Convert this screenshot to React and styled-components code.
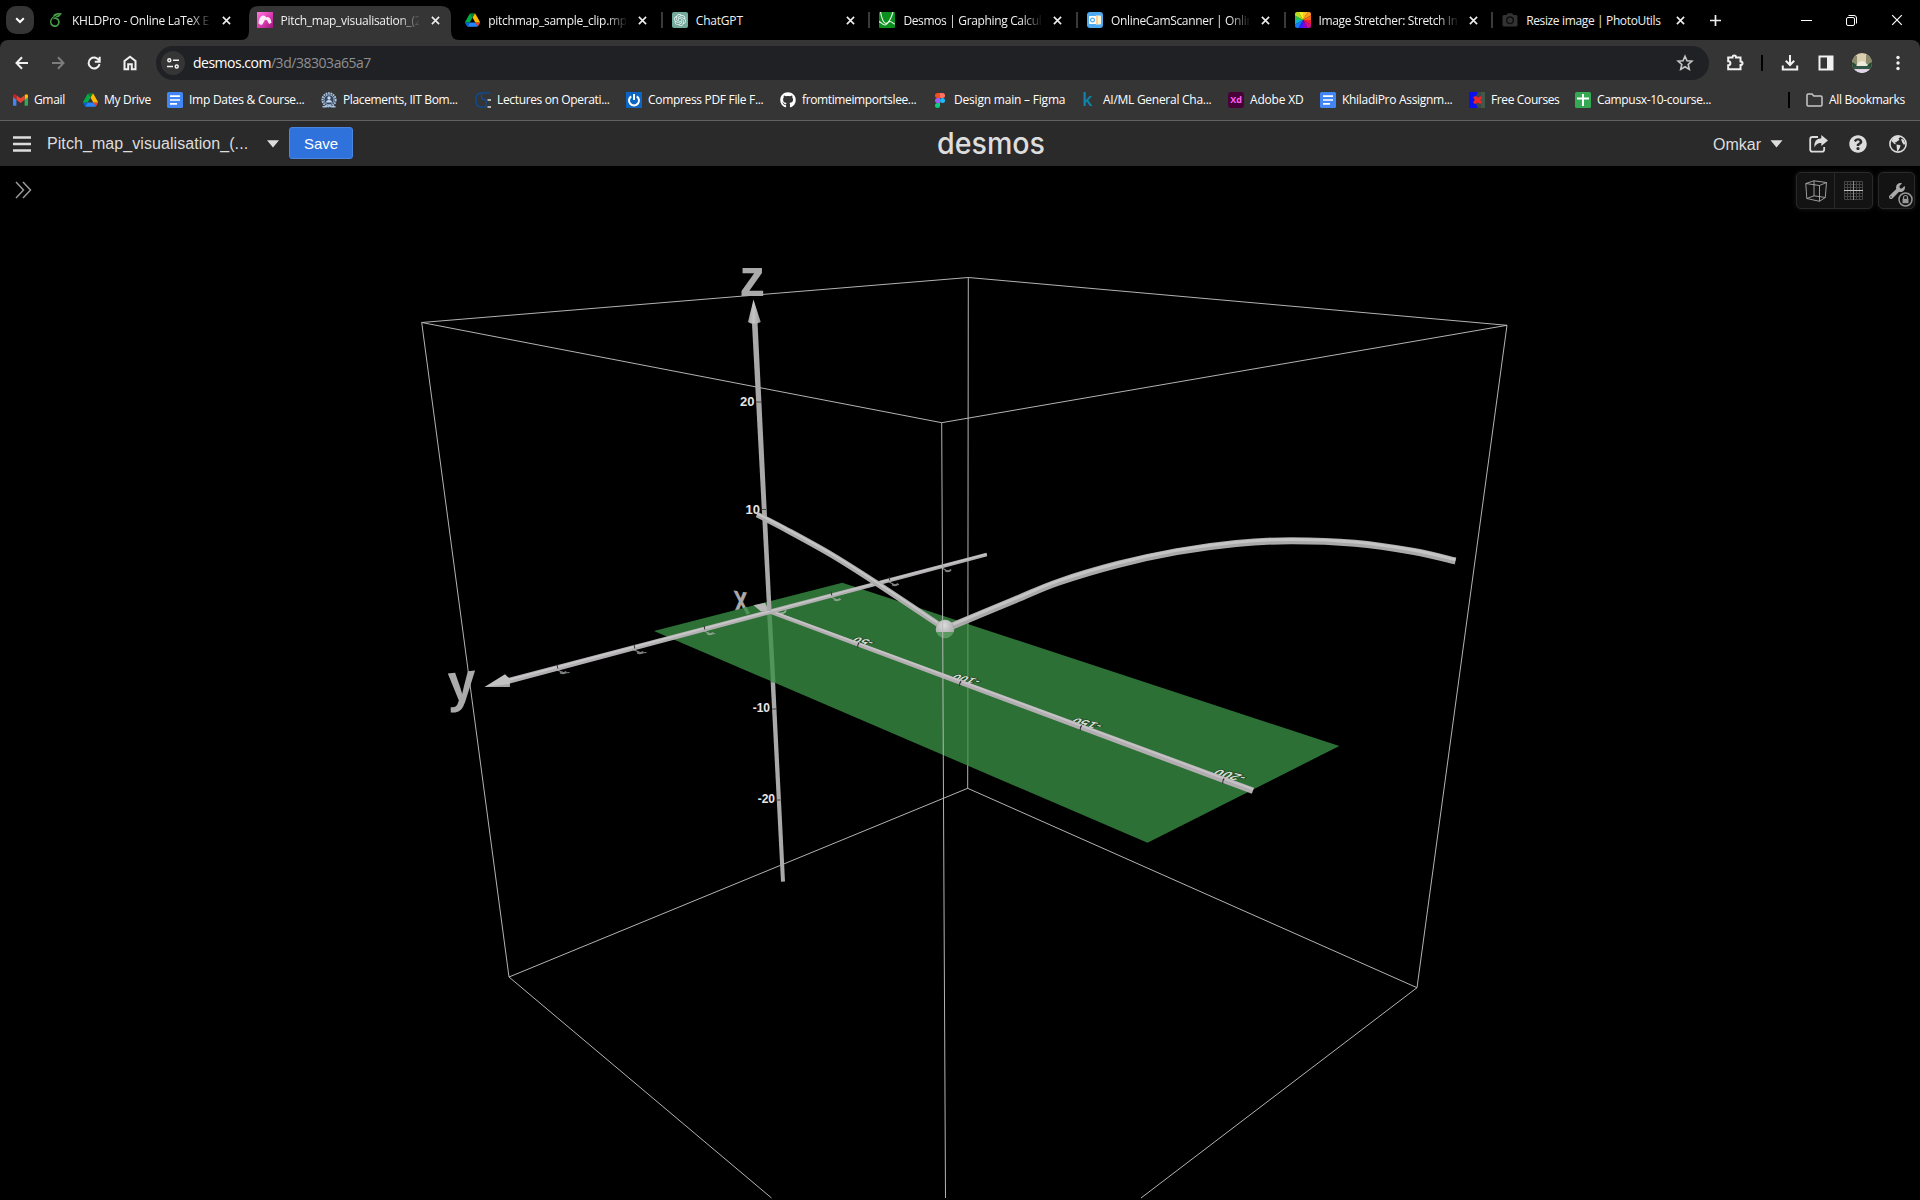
import React from "react";
import styled, { createGlobalStyle, css } from "styled-components";
import { FaGithub, FaWrench, FaQuestionCircle } from "react-icons/fa";
import { SiOverleaf, SiOpenai } from "react-icons/si";

const ui = `"Open Sans", "Noto Sans", sans-serif`;
const arial = `"Liberation Sans", Arial, sans-serif`;

const GlobalStyle = createGlobalStyle`
  html, body { margin: 0; padding: 0; background: #000; overflow: hidden; }
  * { box-sizing: border-box; }
  svg { display: block; flex: none; }
`;

const Window = styled.div`
  width: 1920px;
  height: 1200px;
  display: flex;
  flex-direction: column;
  background: #000;
  color: #fff;
  font-family: ${ui};
`;

/* ---------- tab strip ---------- */
const TabStrip = styled.div`
  height: 40px;
  flex: none;
  display: flex;
  align-items: stretch;
`;
const TabSearch = styled.div`
  width: 28px;
  height: 28px;
  margin: 6px 4px 0 6px;
  border-radius: 10px;
  background: #353535;
  display: flex;
  align-items: center;
  justify-content: center;
`;
const Tab = styled.div`
  width: 207.6px;
  padding: 0 12px 0 3px;
  position: relative;
  display: flex;
  align-items: center;
`;
const ActiveShape = styled.svg`
  position: absolute;
  left: -5px;
  top: 6px;
`;
const TabSep = styled.span`
  width: 2px;
  height: 16px;
  margin-left: -3px;
  margin-right: 9px;
  background: ${(p) => (p.$hidden ? "transparent" : "#3a3a3a")};
`;
const Favicon = styled.span`
  width: 16px;
  height: 16px;
  margin-left: ${(p) => p.$shift || 0}px;
  display: flex;
  position: relative;
  align-items: center;
  justify-content: center;
`;
const TabTitle = styled.span`
  position: relative;
  margin-left: 8px;
  width: 138px;
  height: 20px;
  line-height: 21px;
  font-size: 12px;
  letter-spacing: ${(p) => p.$track}px;
  white-space: nowrap;
  color: #f0f0f0;
  ${(p) =>
    p.$fade &&
    css`
      mask-image: linear-gradient(to right, #000 118px, transparent 140px);
    `}
`;
const TabClose = styled.span`
  position: relative;
  margin-left: 12px;
`;
const NewTab = styled.span`
  display: flex;
  align-items: center;
  margin-left: 11px;
`;
const WindowControls = styled.div`
  margin-left: auto;
  display: flex;
  align-items: center;
  gap: 34px;
  padding-right: 17px;
`;

/* ---------- toolbar ---------- */
const BrowserChrome = styled.div`
  flex: none;
  height: 81px;
  background: #353535;
  border-radius: 8px 8px 0 0;
  border-bottom: 1px solid #626262;
`;
const Toolbar = styled.div`
  height: 46px;
  display: flex;
  align-items: center;
  padding: 0 12px;
`;
const NavIcons = styled.div`
  display: flex;
  gap: 16px;
  margin-right: 16px;
`;
const Omnibox = styled.div`
  width: 1554px;
  height: 34px;
  border-radius: 17px;
  background: #202124;
  display: flex;
  align-items: center;
  padding: 0 14px 0 5px;
`;
const SiteInfo = styled.div`
  width: 24px;
  height: 24px;
  border-radius: 12px;
  background: #353535;
  display: flex;
  align-items: center;
  justify-content: center;
  margin-right: 8px;
`;
const Address = styled.span`
  font-size: 14px;
  line-height: 20px;
  letter-spacing: -0.5px;
  flex: 1;
  color: #fff;
`;
const Path = styled.span`
  color: #8f8f92;
  letter-spacing: -0.46px;
`;
const ToolIcons = styled.div`
  display: flex;
  align-items: center;
  margin-left: 16px;
`;
const ToolSep = styled.span`
  width: 2px;
  height: 16px;
  background: #000;
  margin: ${(p) => p.$m};
`;
const Avatar = styled.span`
  width: 20px;
  height: 20px;
  border-radius: 10px;
  overflow: hidden;
  margin: 0 16px 0 16px;
`;
const SidePanel = styled.span`
  margin-left: 16px;
`;

/* ---------- bookmarks ---------- */
const Bookmarks = styled.div`
  height: 34px;
  margin-top: -3px;
  display: flex;
  align-items: center;
  padding: 0 14px 0 12px;
`;
const Bookmark = styled.div`
  display: flex;
  align-items: center;
  margin-right: 16px;
`;
const BookmarkLabel = styled.span`
  margin-left: 6px;
  width: ${(p) => p.$w}px;
  font-size: 12px;
  line-height: 18px;
  letter-spacing: ${(p) => p.$track}px;
  white-space: nowrap;
  color: #fff;
`;
const AllBookmarks = styled.div`
  margin-left: auto;
  display: flex;
  align-items: center;
`;

/* ---------- calculator header ---------- */
const CalcHeader = styled.header`
  flex: none;
  height: 45px;
  background: #2a2a2a;
  display: grid;
  grid-template-columns: 936px 110px 1fr;
  align-items: center;
  font-family: ${arial};
`;
const HeaderLeft = styled.div`
  display: flex;
  align-items: center;
  padding-left: 13px;
`;
const GraphTitle = styled.span`
  margin-left: 16px;
  width: 220px;
  font-size: 16px;
  line-height: 22px;
  letter-spacing: 0.07px;
  color: #ddd;
  white-space: nowrap;
`;
const SaveButton = styled.button`
  margin-left: 10px;
  width: 64px;
  height: 32px;
  margin-top: -1px;
  padding: 1px 0 0;
  border: 1px solid #4a86e0;
  border-radius: 3px;
  background: #2f72dc;
  color: #fff;
  font: 15px ${arial};
`;
const HeaderRight = styled.div`
  display: flex;
  align-items: center;
  justify-content: flex-end;
  padding-right: 13px;
  color: #ddd;
`;
const UserName = styled.span`
  font-size: 16px;
  margin-right: 9px;
  padding-top: 2px;
`;
const HeaderIcon = styled.span`
  margin-left: ${(p) => p.$gap}px;
`;

/* ---------- graph ---------- */
const GraphArea = styled.main`
  flex: 1;
  position: relative;
  overflow: hidden;
`;
const Expand = styled.div`
  position: absolute;
  left: 15px;
  top: 15px;
`;
const FloatingTools = styled.div`
  position: absolute;
  right: 5px;
  top: 6px;
  display: flex;
  gap: 5px;
`;
const ToolGroup = styled.div`
  height: 37px;
  display: flex;
  border: 1px solid #292929;
  border-radius: 5px;
  background: #131313;
  box-shadow: 0 0 5px rgba(255, 255, 255, 0.1);
`;
const ToolButton = styled.div`
  width: ${(p) => p.$w}px;
  position: relative;
  display: flex;
  align-items: center;
  justify-content: center;
  color: #aaa;
  & + & {
    border-left: 1px solid #292929;
  }
`;
const LockBadge = styled.svg`
  position: absolute;
  right: 1px;
  bottom: 1px;
`;

/* ---------- small drawings ---------- */
const Cross = ({ size = 9, w = 1.8, color = "#eee" }) => (
  <svg width={size} height={size} viewBox="0 0 10 10">
    <path d="M1 1L9 9M9 1L1 9" stroke={color} strokeWidth={w} />
  </svg>
);
const Drive = () => (
  <svg width="15" height="14" viewBox="0 0 87 78">
    <path d="M6.6 66.9l3.9 6.6c.8 1.4 2 2.5 3.3 3.3L27.5 53H0c0 1.5.4 3.1 1.2 4.5z" fill="#0066da" />
    <path d="M43.7 25L29.9 1.2c-1.3.8-2.5 1.9-3.3 3.3L1.2 48.5A9 9 0 0 0 0 53h27.5z" fill="#00ac47" />
    <path d="M73.6 76.8c1.3-.8 2.5-1.9 3.3-3.3l9.2-16c.8-1.4 1.2-3 1.2-4.5H59.8l5.9 11.5z" fill="#ea4335" />
    <path d="M43.7 25L57.4 1.2C56.1.4 54.5 0 52.9 0H34.5c-1.6 0-3.2.4-4.5 1.2z" fill="#00832d" />
    <path d="M59.8 53H27.5L13.8 76.8c1.3.8 2.9 1.2 4.5 1.2h50.8c1.6 0 3.2-.4 4.5-1.2z" fill="#2684fc" />
    <path d="M73.4 26.5L60.7 4.5c-.8-1.4-2-2.5-3.3-3.3L43.7 25l16.1 28h27.5c0-1.5-.4-3.1-1.2-4.5z" fill="#ffba00" />
  </svg>
);
const DesmosPink = () => (
  <svg width="16" height="16" viewBox="0 0 16 16">
    <defs>
      <linearGradient id="pk" x1="0" y1="0" x2="1" y2="1">
        <stop offset="0" stopColor="#ff7ae0" />
        <stop offset=".5" stopColor="#dd3fb4" />
        <stop offset="1" stopColor="#a0127d" />
      </linearGradient>
    </defs>
    <rect width="16" height="16" fill="url(#pk)" />
    <path d="M1.500 11.500C1.800 7 3.800 3.500 6.500 3.500c1.500 0 2.300 1 2.600 2 2.200-1.800 5 .5 5.400 5.200l-2.500 1.300c-1-2.500-2-4.200-3.400-4.200C7 7.800 6.500 13 4 13z" fill="#fbe9f6" />
  </svg>
);
const DesmosGreen = () => (
  <svg width="16" height="16" viewBox="0 0 16 16">
    <rect width="16" height="16" rx="1" fill="#0a8f1f" />
    <path d="M1.500 0C3 8 5 11.500 7 11.500S11.500 8 14 0M0 9.500c2 .5 3.500 3.500 6 3.500s2.500-3.500 5-3.500 3 2.500 5 2.500" fill="none" stroke="#e8f6e8" strokeWidth="1.200" />
  </svg>
);
const ChatGpt = () => (
  <svg width="16" height="16" viewBox="0 0 16 16">
    <rect width="16" height="16" rx="2" fill="#74aa9c" />
    <g transform="translate(2 2)">
      <SiOpenai size={12} color="#e8f3f0" />
    </g>
  </svg>
);
const CamScanner = () => (
  <svg width="16" height="16" viewBox="0 0 16 16">
    <rect width="16" height="16" rx="3" fill="#4fabf0" />
    <rect x="2" y="4" width="8" height="8" rx="1" fill="#fff" />
    <rect x="8.500" y="3.500" width="5.500" height="9" rx="1" fill="#fdf3d0" />
    <circle cx="5.500" cy="8" r="1.900" fill="none" stroke="#4fabf0" strokeWidth="1.200" />
    <path d="M10 4v8" stroke="#f3a04c" strokeWidth=".8" />
  </svg>
);
const wheel = ["#ffc02b", "#ff9a20", "#ff6a1a", "#f0203a", "#d0108a", "#8a00d4", "#3c1af0", "#1279ff", "#10b0d8", "#21c25a", "#b8e020", "#f4ec20"];
const ColorWheel = () => (
  <svg width="16" height="16" viewBox="0 0 16 16">
    <clipPath id="cw"><rect width="16" height="16" rx="2" /></clipPath>
    <g clipPath="url(#cw)">
      {wheel.map((c, i) => {
        const a = ((i * 30 - 90) * Math.PI) / 180;
        const b = (((i + 1) * 30 - 89) * Math.PI) / 180;
        return <path key={c} fill={c} d={`M8 8L${8 + 14 * Math.cos(a)} ${8 + 14 * Math.sin(a)}L${8 + 14 * Math.cos(b)} ${8 + 14 * Math.sin(b)}Z`} />;
      })}
    </g>
  </svg>
);
const PhotoIcon = () => (
  <svg width="16" height="16" viewBox="0 0 16 16">
    <path d="M2 3h2.500L6 1.200h4L11.500 3H14q1.500 0 1.500 1.500v8.500q0 1.500-1.500 1.500H2Q.5 14.500.5 13V4.500Q.5 3 2 3z" fill="#333" />
    <circle cx="8" cy="8.300" r="3.300" fill="none" stroke="#101010" strokeWidth="1.500" />
  </svg>
);
const Gmail = () => (
  <svg width="15" height="12" viewBox="0 0 15 12">
    <path d="M0 1.500V11q0 .8.800.8H3.400V5z" fill="#4285f4" />
    <path d="M15 1.500V11q0 .8-.8.800H11.600V5z" fill="#34a853" />
    <path d="M11.600 1.200V5.800L15 3.200V1.800C15 .2 13.200-.3 12 .8z" fill="#fbbc04" />
    <path d="M3.400 5.800V1.200L7.500 4.300 11.600 1.200V5.800L7.500 8.900z" fill="#ea4335" />
    <path d="M0 1.800V3.200L3.400 5.800V1.200L3 .8C1.800-.3 0 .2 0 1.800z" fill="#c5221f" />
  </svg>
);
const Docs = () => (
  <svg width="16" height="16" viewBox="0 0 16 16">
    <rect width="16" height="16" rx="1.500" fill="#4285f4" />
    <path d="M3 4.200h10M3 8h10M3 11.800h7" stroke="#fff" strokeWidth="1.700" />
  </svg>
);
const Sheets = () => (
  <svg width="16" height="16" viewBox="0 0 16 16">
    <rect width="16" height="16" rx="1.500" fill="#34a853" />
    <path d="M2 6.500h12M8 2v12" stroke="#fff" strokeWidth="2" />
  </svg>
);
const Institute = () => (
  <svg width="16" height="16" viewBox="0 0 16 16">
    <circle cx="8" cy="7.800" r="6.600" fill="none" stroke="#a9c4e4" strokeWidth="2" strokeDasharray="1.700 .8" />
    <circle cx="8" cy="7.800" r="5" fill="#33475f" stroke="#a9c4e4" strokeWidth=".8" />
    <circle cx="8" cy="6" r="1.700" fill="#c4d8ef" />
    <path d="M5 10.500Q5 8 8 8t3 2.500z" fill="#c4d8ef" />
    <path d="M1.500 14.800h3.500L8 13.500l3 1.300h3.500" stroke="#a9c4e4" strokeWidth="1.400" fill="none" />
  </svg>
);
const Lectures = () => (
  <svg width="16" height="16" viewBox="0 0 16 16">
    <path d="M6.500 .8C2.500 1 .8 4 .8 8s1.700 7 5.700 7.200" fill="none" stroke="#0b4c9c" strokeWidth="1.300" />
    <path d="M15.500 .8H8.500Q6.500 .8 6.500 3v2.500Q6.500 7.500 8.500 7.500h.5q2 0 2 2V13q0 2.200-2 2.200H5.500" fill="none" stroke="#0b4c9c" strokeWidth="1.300" />
    <path d="M12.500 8H16M12.500 15H16" stroke="#ddd" strokeWidth="1.600" />
  </svg>
);
const Compress = () => (
  <svg width="16" height="16" viewBox="0 0 16 16">
    <rect width="16" height="16" fill="#0a66c2" />
    <path d="M5.200 4.300A5 5 0 1 0 10.800 4.300M8 2v6" fill="none" stroke="#fff" strokeWidth="2" />
  </svg>
);
const Figma = () => (
  <svg width="16" height="16" viewBox="0 0 16 16">
    <path d="M5.500 1H8v5H5.500a2.500 2.500 0 0 1 0-5z" fill="#f24e1e" />
    <path d="M8 1h2.500a2.500 2.500 0 0 1 0 5H8z" fill="#ff7262" />
    <path d="M5.500 6H8v5H5.500a2.500 2.500 0 0 1 0-5z" fill="#a259ff" />
    <circle cx="10.500" cy="8.500" r="2.500" fill="#1abcfe" />
    <path d="M5.500 11H8v2.500A2.500 2.500 0 1 1 5.500 11z" fill="#0acf83" />
  </svg>
);
const KaggleMark = styled.span`
  font: 600 18px/16px "Open Sans", sans-serif;
  color: #0f83ae;
  margin: -2px 3px 0 0;
`;
const XdMark = styled.span`
  width: 16px;
  height: 16px;
  border-radius: 3px;
  background: #470137;
  color: #ff61f6;
  font: bold 9px/15px "Open Sans", sans-serif;
  text-align: center;
`;
const FreeCourses = () => (
  <svg width="16" height="16" viewBox="0 0 16 16">
    <rect width="10" height="16" fill="#0a10f0" />
    <path d="M9 0h7v16H9l-4-8z" fill="#3d4a44" />
    <path d="M16 0v16h-4V0z" fill="#3f5a48" />
    <path d="M4 5l3-1 2 2 2.500-2L13 6l-2 2 2 2-2 2-2-1.500L6 12l-2-1.500L6 8z" fill="#f0222c" />
  </svg>
);
const Folder = () => (
  <svg width="17" height="14" viewBox="0 0 17 14">
    <path d="M1 2.200Q1 1 2.200 1H6l1.800 2h6.900Q16 3 16 4.200v7.600Q16 13 14.700 13H2.200Q1 13 1 11.800z" fill="none" stroke="#c7c7c7" strokeWidth="1.500" />
  </svg>
);
const Icon20 = ({ children, color = "#f1f1f1" }) => (
  <svg width="20" height="20" viewBox="0 0 20 20" fill="none" stroke={color} strokeWidth="2">
    {children}
  </svg>
);
const Caret = ({ w = 12 }) => (
  <svg width={w} height="8" viewBox="0 0 12 8"><path d="M0 .3h12L6 7.500z" fill="#ddd" /></svg>
);

const tabs = [
  { title: "KHLDPro - Online LaTeX E", icon: <SiOverleaf size={14} color="#46a247" />, track: -0.28, fade: true, shift: -1 },
  { title: "Pitch_map_visualisation_(2", icon: <DesmosPink />, active: true, track: -0.28, fade: true },
  { title: "pitchmap_sample_clip.mp4", icon: <Drive />, track: -0.26, fade: true },
  { title: "ChatGPT", icon: <ChatGpt />, track: -0.2, sep: true },
  { title: "Desmos | Graphing Calcula", icon: <DesmosGreen />, track: -0.35, fade: true, sep: true },
  { title: "OnlineCamScanner | Onlin", icon: <CamScanner />, track: -0.33, fade: true, sep: true },
  { title: "Image Stretcher: Stretch Im", icon: <ColorWheel />, track: -0.36, fade: true, sep: true },
  { title: "Resize image | PhotoUtils", icon: <PhotoIcon />, track: -0.36, sep: true },
];

const bookmarks = [
  ["Gmail", <Gmail />, 32, -0.35],
  ["My Drive", <Drive />, 47, -0.3],
  ["Imp Dates & Course...", <Docs />, 116, -0.26],
  ["Placements, IIT Bom...", <Institute />, 116, -0.37],
  ["Lectures on Operati...", <Lectures />, 113, -0.35],
  ["Compress PDF File F...", <Compress />, 116, -0.32],
  ["fromtimeimportslee...", <FaGithub size={16} />, 114, -0.37],
  ["Design main – Figma", <Figma />, 111, -0.2],
  ["AI/ML General Cha...", <KaggleMark>k</KaggleMark>, 109, -0.27],
  ["Adobe XD", <XdMark>Xd</XdMark>, 54, -0.2],
  ["KhiladiPro Assignm...", <Docs />, 111, -0.3],
  ["Free Courses", <FreeCourses />, 68, -0.37],
  ["Campusx-10-course...", <Sheets />, 116, -0.33],
];

/* a bar that tapers with distance from the viewer */
const Taper = ({ x1, y1, w1, x2, y2, w2, fill }) => {
  const l = Math.hypot(x2 - x1, y2 - y1);
  const nx = -(y2 - y1) / l / 2;
  const ny = (x2 - x1) / l / 2;
  return (
    <polygon
      fill={fill}
      points={`${x1 + nx * w1},${y1 + ny * w1} ${x2 + nx * w2},${y2 + ny * w2} ${x2 - nx * w2},${y2 - ny * w2} ${x1 - nx * w1},${y1 - ny * w1}`}
    />
  );
};

/* smooth path through sampled points */
const spline = (pts, dy = 0) =>
  pts
    .map(([x, y], i) => {
      if (i === 0) return `M${x} ${y + dy}`;
      const p0 = pts[Math.max(i - 2, 0)];
      const p1 = pts[i - 1];
      const p3 = pts[Math.min(i + 1, pts.length - 1)];
      return `C${p1[0] + (x - p0[0]) / 6} ${p1[1] + (y - p0[1]) / 6 + dy} ${x - (p3[0] - p1[0]) / 6} ${y - (p3[1] - p1[1]) / 6 + dy} ${x} ${y + dy}`;
    })
    .join("");

const bounce = [
  [945, 629], [1014.7, 600], [1058.2, 582.2], [1117.5, 564.5], [1176.8, 551.6],
  [1236, 543.5], [1290, 540.7], [1354.7, 543.2], [1414, 551.5], [1455.500, 561],
];
const delivery = [[757, 514.5], [785, 529], [831, 554.500], [877, 583.500], [944, 628]];

const Edge = styled.polyline`
  fill: none;
  stroke: #bdbdbd;
  stroke-width: 0.95;
`;
const AxisName = styled.text`
  font: bold ${(p) => p.$size}px ${arial};
  fill: #aaaaaa;
`;
const TickText = styled.text`
  font: bold ${(p) => p.$size || 13}px ${arial};
  fill: #e6e6e6;
  text-anchor: end;
`;
const FloorText = styled.text`
  font: bold ${(p) => p.$size}px ${arial};
  fill: #d3dfd3;
  stroke: #173a1b;
  stroke-width: 1.8px;
  paint-order: stroke;
  text-anchor: middle;
`;

const floorTicks = [
  [869, 645, "-50", 15],
  [972, 683, "-100", 15],
  [1093, 727, "-150", 16],
  [1236, 778.5, "-200", 17],
];
const yTicks = [
  [557, 667, 5], [634, 647, 5], [704, 628, 4.5], [831, 594, 4], [889, 579, 4], [942, 565, 3.5],
];
const xTicks = [[858, 643.5], [960, 682], [1080.5, 726.5], [1223, 779.5]];
const zTicks = [[758.5, 402], [764, 509.5], [774.5, 709], [779, 800]];

const Scene = () => (
  <svg width="1920" height="1034" viewBox="0 166 1920 1034">
    <defs>
      <radialGradient id="ball" cx=".45" cy=".3" r=".7">
        <stop offset="0" stopColor="#dcdcdc" />
        <stop offset="1" stopColor="#a2a2a2" />
      </radialGradient>
      <linearGradient id="cone" x1="0" y1="0" x2="1" y2="0">
        <stop offset="0" stopColor="#a6a6a6" />
        <stop offset=".45" stopColor="#c6c6c6" />
        <stop offset="1" stopColor="#9a9a9a" />
      </linearGradient>
      <clipPath id="upper"><rect x="930" y="610" width="30" height="22" /></clipPath>
    </defs>
    <Edge points="421.700,322.500 968.300,277.500 1507,325.300 941.700,422.700 421.700,322.500 509,977 967.700,788.300 1417,987.700 1507,325.300" />
    <Edge points="968.300,277.500 967.700,788.300" />
    <Edge points="509,977 771.500,1198" />
    <Edge points="1417,987.700 1141,1198" />

    {/* vertical axis, lower half */}
    <Taper x1={769.3} y1={611} w1={4.6} x2={783} y2={881.7} w2={4} fill="#a9a9a9" />
    <text x="0" y="0" transform="matrix(.66 .1 .07 1 734.500 611)" fontFamily="Liberation Sans, Arial, sans-serif" fontWeight="bold" fontSize="39" fill="#a8a8a8">x</text>

    {/* pitch surface */}
    <polygon points="654,631 842.300,582.700 1339.300,746 1147.500,842.700" fill="#2d7035" />
    <path d="M967.900 624V766" stroke="#5f9d66" strokeWidth="1" />
    <Taper x1={769.3} y1={611} w1={4.6} x2={773.2} y2={682.500} w2={4.400} fill="#529459" />
    <polygon points="753.500,605.300 765,602.700 769,610.700 761,611.500" fill="#b9b9b9" />
    <path d="M744.800 607.500L748.300 614" stroke="#4e9256" strokeWidth="3.500" />
    <path d="M776 613.500q9 .5 10-3" stroke="#9dbb9f" strokeWidth="1.500" fill="none" />

    {/* floor labels */}
    {floorTicks.map(([x, y, t, s]) => (
      <FloorText key={t} $size={s} transform={`matrix(-.88 -.2 .6 -.5 ${x - 3} ${y - 6})`} x="0" y="0">{t}</FloorText>
    ))}
    {yTicks.map(([x, y, s]) => (
      <g key={x} stroke="#a9b0a9" fill="none" opacity=".75">
        <path d={`M${x} ${y + 3}l${s * 1.500} 3l${s} -.5`} strokeWidth="1.200" />
        <path d={`M${x + 3} ${y + 5.500}q4 2 6-1`} strokeWidth="1.800" />
      </g>
    ))}

    {/* horizontal axes */}
    <Taper x1={769.3} y1={611.3} w1={4} x2={1253} y2={790.8} w2={6.500} fill="#b1adb1" />
    <Taper x1={769.3} y1={610.3} w1={1.500} x2={1253} y2={789.200} w2={2} fill="#c6c3c6" />
    <Taper x1={506} y1={681.500} w1={6} x2={986.800} y2={554.500} w2={3.600} fill="#b3b0b3" />
    <Taper x1={506} y1={680.500} w1={2} x2={986.800} y2={554} w2={1} fill="#c8c8c8" />
    <polygon points="484.500,687 505,674.300 510,679 509.700,686.700" fill="#c2c2c2" />
    <polygon points="484.500,687 509.700,684 509.700,687" fill="#a6a6a6" />
    {yTicks.map(([x, y]) => <path key={x} d={`M${x} ${y - 2.500}l.8 4`} stroke="#333" strokeWidth="1" />)}
    {xTicks.map(([x, y]) => <path key={x} d={`M${x + 1.2} ${y - 1}q-2 2-1.500 5`} fill="none" stroke="#2f2a2f" strokeWidth="1.100" />)}

    {/* vertical axis, upper half */}
    <Taper x1={754.7} y1={322} w1={5.600} x2={769.4} y2={611} w2={4.400} fill="#a9a9a9" />
    <polygon points="753.500,299.500 760.700,322 757,323.500 751,323.500 748,322" fill="url(#cone)" />
    {zTicks.map(([x, y]) => <path key={y} d={`M${x - 2.500} ${y}h5`} stroke="#444" strokeWidth="1" />)}
    <AxisName $size={51} x="739.500" y="295.500">z</AxisName>
    <AxisName $size={54} transform="matrix(.93 -.1 .02 1 448 702)" x="0" y="0">y</AxisName>
    <TickText x="754.500" y="405.500">20</TickText>
    <TickText x="760" y="514">10</TickText>
    <TickText $size={12} x="770" y="711.500">-10</TickText>
    <TickText $size={12} x="775" y="803">-20</TickText>

    {/* flight path */}
    <g fill="none" strokeLinecap="butt">
      <path d={spline(delivery)} stroke="#adadad" strokeWidth="5.800" />
      <path d={spline(delivery, -1)} stroke="#c6c6c6" strokeWidth="2" />
      <path d={spline(bounce)} stroke="#a9a9a9" strokeWidth="7" />
      <path d={spline(bounce, -1.3)} stroke="#c4c4c4" strokeWidth="3" />
    </g>
    <circle cx="945" cy="629" r="9.200" fill="#5a9a61" />
    <circle cx="945" cy="629" r="9.200" fill="url(#ball)" clipPath="url(#upper)" />

    <Edge points="941.700,422.700 943.700,840 945.500,1198" />
  </svg>
);

export default function App() {
  return (
    <Window>
      <GlobalStyle />
      <TabStrip>
        <TabSearch>
          <svg width="10" height="7" viewBox="0 0 10 7"><path d="M1.200 1.200L5 5l3.800-3.800" fill="none" stroke="#fff" strokeWidth="2" /></svg>
        </TabSearch>
        {tabs.map((t) => (
          <Tab key={t.title}>
            {t.active && (
              <ActiveShape width="218" height="34" viewBox="0 0 218 34">
                <path d="M0 34Q8 34 8 25V10Q8 0 18 0H200Q210 0 210 10V25Q210 34 218 34z" fill="#353535" />
              </ActiveShape>
            )}
            <TabSep $hidden={!t.sep} />
            <Favicon $shift={t.shift}>{t.icon}</Favicon>
            <TabTitle $track={t.track} $fade={t.fade}>{t.title}</TabTitle>
            <TabClose><Cross /></TabClose>
          </Tab>
        ))}
        <NewTab>
          <svg width="11" height="11" viewBox="0 0 11 11"><path d="M5.500 0v11M0 5.500h11" stroke="#eee" strokeWidth="1.700" /></svg>
        </NewTab>
        <WindowControls>
          <svg width="11" height="11" viewBox="0 0 11 11"><path d="M0 5.500h11" stroke="#fff" /></svg>
          <svg width="11" height="11" viewBox="0 0 11 11" fill="none" stroke="#fff">
            <rect x=".5" y="2.500" width="8" height="8" rx="1.500" />
            <path d="M2.500 .5H8Q10.500 .5 10.500 3V8.500" />
          </svg>
          <Cross size={12} w={1} color="#fff" />
        </WindowControls>
      </TabStrip>

      <BrowserChrome>
        <Toolbar>
          <NavIcons>
            <Icon20><path d="M16 10H4.800M10 4.300L4.500 10l5.500 5.700" /></Icon20>
            <Icon20 color="#7d7d7d"><path d="M4 10h11.200M10 4.300l5.500 5.700-5.500 5.700" /></Icon20>
            <Icon20><path d="M15.300 8.200A5.500 5.500 0 1 0 15.500 11M15.700 3.800V8.700H10.800" /></Icon20>
            <Icon20><path d="M4.500 16.200V8L10 3.800 15.500 8v8.200h-3.700v-5H8.200v5z" /></Icon20>
          </NavIcons>
          <Omnibox>
            <SiteInfo>
              <svg width="12" height="11" viewBox="0 0 12 11" fill="none" stroke="#f1f1f1" strokeWidth="1.500">
                <circle cx="2.300" cy="2.300" r="1.500" /><path d="M6 2.300h6M0 8.500h6" /><circle cx="9.700" cy="8.500" r="1.500" />
              </svg>
            </SiteInfo>
            <Address>desmos.com<Path>/3d/38303a65a7</Path></Address>
            <Icon20 color="#c7c7c7"><path strokeWidth="1.600" d="M10 3.200l2 4.600 4.900.4-3.700 3.300 1.100 4.900L10 13.800l-4.300 2.600 1.100-4.900-3.700-3.300 4.900-.4z" /></Icon20>
          </Omnibox>
          <ToolIcons>
            <Icon20><path d="M3.200 4.500H7.500Q7.500 2.500 9.300 2.500T11 4.500h4.500V8.500q2 0 2 1.800t-2 1.800v4.200H3.200v-4q2.200 0 2.200-2t-2.200-2z" /></Icon20>
            <ToolSep $m="0 17px 0 16px" />
            <Icon20><path d="M10 2v9.500M5.800 7.800L10 12l4.200-4.200M2.800 12.500v4H17.200v-4" /></Icon20>
            <SidePanel>
              <svg width="20" height="20" viewBox="0 0 20 20">
                <rect x="3.500" y="3.500" width="13" height="13" fill="none" stroke="#f1f1f1" strokeWidth="2" />
                <rect x="11" y="3.500" width="6" height="13" fill="#f1f1f1" />
              </svg>
            </SidePanel>
            <Avatar>
              <svg width="20" height="20" viewBox="0 0 20 20">
                <rect width="20" height="20" fill="#d9cfae" />
                <path d="M0 3h5v10H0zM14 2h6v9h-6z" fill="#8b8a6c" />
                <path d="M0 9q5 2 5 6H0zM20 9q-5 2-6 6h6z" fill="#1f4b33" />
                <path d="M6 10q4-4 8 0l2 4H4z" fill="#eceade" />
                <path d="M2 13h16v3H2z" fill="#31564a" />
                <path d="M0 16.500h20V20H0z" fill="#e2d3ef" />
              </svg>
            </Avatar>
            <svg width="20" height="20" viewBox="0 0 20 20" fill="#f1f1f1"><circle cx="10" cy="4.500" r="1.700" /><circle cx="10" cy="10" r="1.700" /><circle cx="10" cy="15.500" r="1.700" /></svg>
          </ToolIcons>
        </Toolbar>
        <Bookmarks>
          {bookmarks.map(([label, icon, w, track]) => (
            <Bookmark key={label}>
              <Favicon>{icon}</Favicon>
              <BookmarkLabel $w={w} $track={track}>{label}</BookmarkLabel>
            </Bookmark>
          ))}
          <AllBookmarks>
            <ToolSep $m="0 16px 0 0" />
            <Folder />
            <BookmarkLabel $w={77} $track={-0.32}>All Bookmarks</BookmarkLabel>
          </AllBookmarks>
        </Bookmarks>
      </BrowserChrome>

      <CalcHeader>
        <HeaderLeft>
          <svg width="18" height="16" viewBox="0 0 18 16"><path d="M0 1.500h18M0 8h18M0 14.500h18" stroke="#ddd" strokeWidth="2.600" /></svg>
          <GraphTitle>Pitch_map_visualisation_(...</GraphTitle>
          <Caret />
          <SaveButton>Save</SaveButton>
        </HeaderLeft>
        <svg width="110" height="45" viewBox="0 0 110 45">
          <text x="1" y="33" textLength="108" lengthAdjust="spacingAndGlyphs" fontFamily="Inter, Lato, sans-serif" fontWeight="500" fontSize="30" fill="#ddd">desmos</text>
        </svg>
        <HeaderRight>
          <UserName>Omkar</UserName>
          <Caret w={13} />
          <HeaderIcon $gap={26}>
            <svg width="19" height="18" viewBox="0 0 19 18">
              <path d="M9 2H3.500Q1.200 2 1.200 4.200V14.500Q1.200 16.700 3.500 16.700H13Q15.200 16.700 15.200 14.500V12" fill="none" stroke="#ddd" strokeWidth="1.800" />
              <path d="M12.300 0L19 5.500 12.300 11V8Q7.500 7.500 5.500 12.500 4.500 3.500 12.300 3.200z" fill="#ddd" />
            </svg>
          </HeaderIcon>
          <HeaderIcon $gap={21}><FaQuestionCircle size={18} /></HeaderIcon>
          <HeaderIcon $gap={22}>
            <svg width="18" height="18" viewBox="0 0 18 18">
              <circle cx="9" cy="9" r="8.100" fill="none" stroke="#ddd" strokeWidth="1.600" />
              <path d="M4 3.200Q6.500 .8 10 1l1 1.500-1.500 1L10.500 5 8.500 6 7 7.500l-1.500-.7L7 9.300 5.500 9 2.500 6z" fill="#ddd" />
              <path d="M7.500 9.500L11.500 10.300 10.800 13l-2 3.300-.8-.5-.2-3z" fill="#ddd" />
              <path d="M12 4l2.500 .5 1.800 4-1.300 1.500L13.200 7.500z" fill="#ddd" />
            </svg>
          </HeaderIcon>
        </HeaderRight>
      </CalcHeader>

      <GraphArea>
        <Scene />
        <Expand>
          <svg width="17" height="18" viewBox="0 0 17 18"><path d="M1 1l7.500 8L1 17M8 1l7.500 8L8 17" fill="none" stroke="#999" strokeWidth="1.500" /></svg>
        </Expand>
        <FloatingTools>
          <ToolGroup>
            <ToolButton $w={37}>
              <svg width="22" height="22" viewBox="0 0 22 22" fill="none" stroke="#aaa" strokeWidth=".9">
                <path d="M.8 3.500L14.500 5.500V21.300L1.800 18.500zM.8 3.500L9 .8 21.500 2.500 14.500 5.500M21.500 2.500L20.300 17.500 14.500 21.300M9 .8V15.800L1.800 18.500M9 15.800L20.300 17.500" />
              </svg>
            </ToolButton>
            <ToolButton $w={38}>
              <svg width="19" height="19" viewBox="0 0 19 19" fill="none">
                <path d="M.5 .5h18v18H.5zM.5 3.500h18M.5 6.500h18M.5 12.500h18M.5 15.500h18M3.500 .5v18M6.500 .5v18M12.500 .5v18M15.500 .5v18" stroke="#444" />
                <path d="M9.500 0v19" stroke="#888" />
                <path d="M0 9.500h19" stroke="#c0c0c0" />
              </svg>
            </ToolButton>
          </ToolGroup>
          <ToolGroup>
            <ToolButton $w={35}>
              <FaWrench size={16} />
              <LockBadge width="15" height="15" viewBox="0 0 15 15">
                <circle cx="7.500" cy="7.500" r="6.500" fill="#131313" stroke="#999" strokeWidth="1.500" />
                <rect x="4.500" y="6.800" width="6" height="4.400" fill="#999" />
                <path d="M5.500 7V5.500a2 2 0 0 1 4 0V7" fill="none" stroke="#999" strokeWidth="1.200" />
              </LockBadge>
            </ToolButton>
          </ToolGroup>
        </FloatingTools>
      </GraphArea>
    </Window>
  );
}
